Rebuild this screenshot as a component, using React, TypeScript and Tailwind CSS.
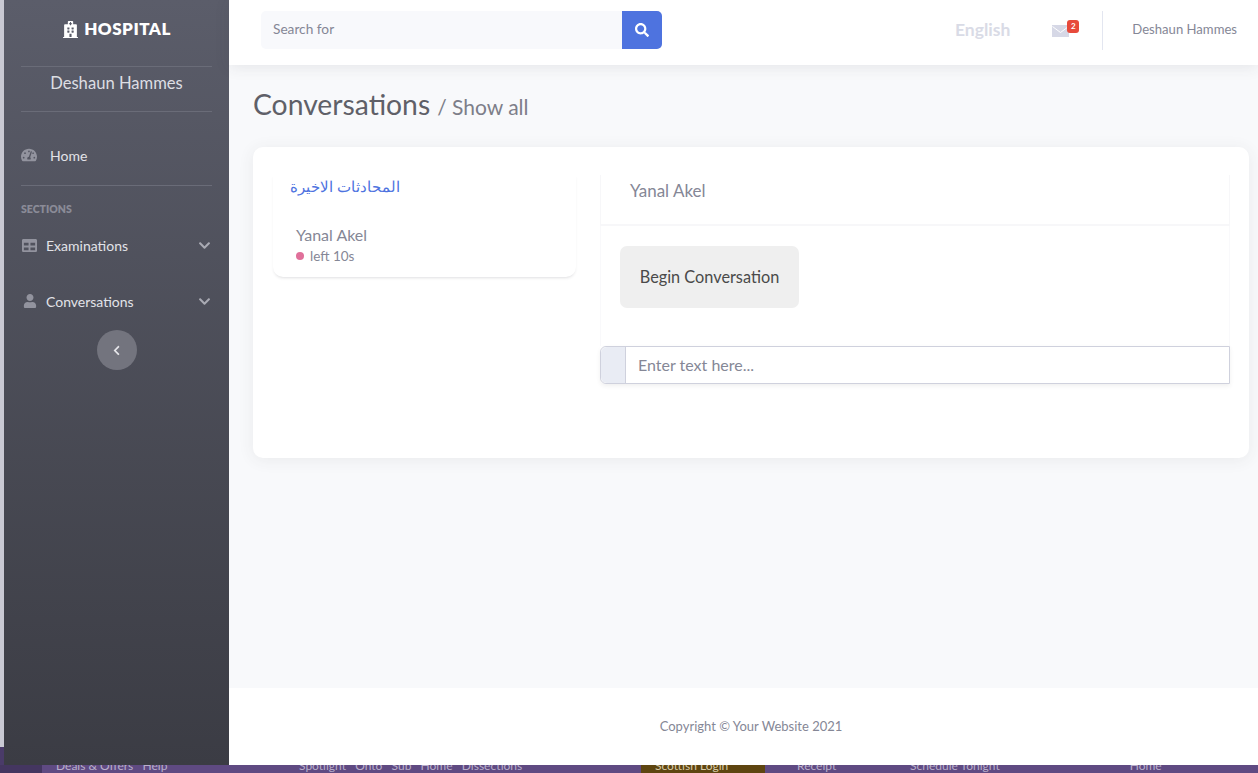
import React from 'react';
import { FaChevronDown, FaChevronLeft, FaHospital, FaSearch, FaTable, FaTachometerAlt, FaUser } from 'react-icons/fa';

const Divider = ({ className }: { className: string }) => (
  <div className={`mx-[17px] h-px bg-[#6a6c78] ${className}`} />
);

const NavSection = ({ icon, label, className }: { icon: React.ReactNode; label: string; className: string }) => (
  <div className={`flex items-center pl-[18px] pr-[18px] text-[14px] text-[#e2e3e8] ${className}`}>
    <span className="flex w-[15px] justify-center text-[#92939e]">{icon}</span>
    <span className="ml-[9px] flex-1">{label}</span>
    <FaChevronDown className="text-[13px] text-[#a9aab3]" />
  </div>
);

const Sidebar = () => (
  <aside className="flex w-[225px] flex-col bg-gradient-to-b from-[#5b5d6a] to-[#3b3c44]">
    <div className="flex h-[66px] items-center justify-center gap-[5px] pb-[8px] text-[17px] font-extrabold tracking-[0.5px] text-white">
      <FaHospital className="text-[17px]" />
      <span>HOSPITAL</span>
    </div>
    <Divider className="" />
    <div className="flex h-[44px] items-center justify-center pb-[11px] text-[16.6px] text-[#dddee3]">Deshaun Hammes</div>
    <Divider className="" />
    <div className="mt-[31px] flex h-[24px] items-center pl-[17px] text-[14px] text-[#e2e3e8]">
      <FaTachometerAlt className="text-[16px] text-[#92939e]" />
      <span className="ml-[13px]">Home</span>
    </div>
    <Divider className="mt-[18px]" />
    <div className="mt-[16px] pl-[17px] text-[10.5px] leading-[14px] font-extrabold text-[#8a8b97]">SECTIONS</div>
    <NavSection icon={<FaTable className="text-[15px]" />} label="Examinations" className="mt-[17px] h-[24px]" />
    <NavSection icon={<FaUser className="text-[14px]" />} label="Conversations" className="mt-[32px] h-[24px]" />
    <button className="mx-auto mt-[17px] flex h-[40px] w-[40px] items-center justify-center rounded-full bg-[#73747e] text-[11px] text-[#e6e6ea]">
      <FaChevronLeft />
    </button>
  </aside>
);

const Topbar = () => (
  <header className="relative z-10 flex h-[65px] shrink-0 items-center bg-white pb-[5px] pl-[32px] pr-[21px] shadow-[0_2px_14px_rgba(58,59,69,0.1)]">
    <div className="flex h-[38px] w-[401px]">
      <div className="flex flex-1 items-center rounded-l-[5px] bg-[#f8f9fc] pb-[1px] pl-[12px] text-[13.7px] text-[#858796]">Search for</div>
      <button className="flex w-[40px] items-center justify-center rounded-r-[5px] bg-[#4e73df] text-[14px] text-white">
        <FaSearch />
      </button>
    </div>
    <div className="ml-auto text-[17.5px] font-bold text-[#d9dbe6]">English</div>
    <div className="relative ml-[42px] mt-[1px]">
      <svg width="17" height="12" viewBox="0 0 17 12" className="block">
        <rect width="17" height="12" fill="#d6d8e6" />
        <path d="M0.5 1.5 L8.5 7.5 L16.5 1.5" fill="none" stroke="#ffffff" strokeWidth="1" />
      </svg>
      <span className="absolute -right-[10px] -top-[5px] flex h-[13px] w-[12px] items-center justify-center rounded-[3px] bg-[#e74a3b] text-[8px] font-bold text-white">2</span>
    </div>
    <div className="ml-[33px] h-[39px] w-px bg-[#e3e6f0]" />
    <div className="ml-[29px] pb-[1px] text-[13.1px] text-[#858796]">Deshaun Hammes</div>
  </header>
);

const ConversationList = () => (
  <div className="h-[102px] w-[303px] shrink-0 rounded-b-[10px] bg-white px-[17px] shadow-[0_2px_3px_-1px_rgba(58,59,69,0.16)]">
    <div dir="rtl" className="h-[50px] w-fit text-[15px] leading-[22px] text-[#4e73df]">المحادثات الاخيرة</div>
    <div className="pl-[6px] text-[16px] leading-[20px] text-[#858796]">Yanal Akel</div>
    <div className="mt-[1px] flex items-center pl-[6px] text-[13.5px] leading-[20px] text-[#858796]">
      <span className="mr-[6px] h-[8px] w-[8px] rounded-full bg-[#e0709a]" />
      left 10s
    </div>
  </div>
);

const ChatPanel = () => (
  <div className="ml-[24px] flex-1">
    <div className="h-[51px] border-x border-b-2 border-[#f7f7f9] pl-[29px] pt-[4px] text-[17px] leading-[24px] text-[#858796]">Yanal Akel</div>
    <div className="h-[120px] border-x border-[#f9f9fb] pl-[19px] pt-[20px]">
      <div className="flex h-[62px] w-[179px] items-center justify-center rounded-[7px] bg-[#efefef] text-[16.3px] text-[#4a4a4a]">Begin Conversation</div>
    </div>
    <div className="flex h-[38px] rounded-l-[6px] border border-[#cfd1dd] shadow-[0_2px_4px_rgba(58,59,69,0.08)]">
      <div className="w-[25px] rounded-l-[6px] border-r border-[#cfd1dd] bg-[#e9ecf4]" />
      <div className="flex flex-1 items-center pb-[1px] pl-[12px] text-[16px] text-[#858796]">Enter text here...</div>
    </div>
  </div>
);

const Main = () => (
  <main className="flex min-w-0 flex-1 flex-col bg-[#f8f9fb]">
    <Topbar />
    <div className="flex-1 pl-[24px] pr-[9px]">
      <div className="flex h-[82px] items-center pb-[4px] text-[#5f6068]">
        <h1 className="text-[28.3px] leading-[36px]">Conversations</h1>
        <span className="ml-[7px] mt-[6px] text-[21px] text-[#7d7e89]">/ Show all</span>
      </div>
      <div className="flex h-[311px] rounded-[10px] bg-white pl-[20px] pr-[19px] pt-[28px] shadow-[0_2px_16px_rgba(58,59,69,0.08)]">
        <ConversationList />
        <ChatPanel />
      </div>
    </div>
    <footer className="flex h-[77px] shrink-0 items-center justify-center bg-white pl-[15px] text-[13px] text-[#858796]">Copyright © Your Website 2021</footer>
  </main>
);

const BehindStrip = () => (
  <div className="flex h-[8px] shrink-0 overflow-hidden bg-[#5f4a82] text-[12px] leading-[2px] text-[#b9aecb]">
    <div className="w-[42px] bg-[#443660]" />
    <div className="w-[257px] whitespace-nowrap pl-[14px]">Deals &amp; Offers &nbsp; Help</div>
    <div className="w-[342px] whitespace-nowrap">
      Spotlight &nbsp; Onto &nbsp; Sub &nbsp; Home &nbsp; Dissections
    </div>
    <div className="w-[124px] whitespace-nowrap bg-[#5e4510] pl-[14px] text-[#d8cba8]">Scottish Login</div>
    <div className="ml-[32px] w-[113px] whitespace-nowrap">Receipt</div>
    <div className="whitespace-nowrap">Schedule Tonight</div>
    <div className="ml-[130px] whitespace-nowrap">Home</div>
  </div>
);

export default function App() {
  return (
    <div className="flex h-[773px] w-[1258px] flex-col overflow-hidden bg-[#5f4a82] font-['Lato','Noto_Sans',sans-serif]">
      <div className="flex h-[765px] shrink-0">
        <div className="w-[4px] bg-[#4a3b69]">
          <div className="h-[747px] bg-[#c9c9d3]" />
        </div>
        <Sidebar />
        <Main />
      </div>
      <BehindStrip />
    </div>
  );
}
